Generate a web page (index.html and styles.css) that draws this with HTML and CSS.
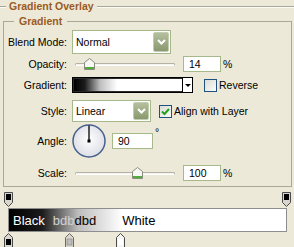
FILE: index.html
```html
<!DOCTYPE html>
<html>
  <head>
    <title>Gradient Overlay</title>
    <meta name="viewport" content="width=device-width, initial-scale=1.0" />
    <link rel="stylesheet" href="styles.css">
  </head>
  <body>
    <div class="panel">
      <div class="heading">
        <span class="rule rule-short"></span>
        <span class="heading-text">Gradient Overlay</span>
        <span class="rule"></span>
      </div>

      <fieldset class="group">
        <legend class="group-title">Gradient</legend>

        <div class="row row-blend">
          <span class="label">Blend Mode:</span>
          <div class="select select-blend">
            <span class="select-value">Normal</span>
            <span class="drop-btn">
              <svg width="9" height="6" viewBox="0 0 9 6"><path d="M1 1l3.5 3.5L8 1" stroke="#fff" stroke-width="2" fill="none"/></svg>
            </span>
          </div>
        </div>

        <div class="row row-opacity">
          <span class="label">Opacity:</span>
          <div class="slider">
            <span class="track"></span>
            <svg class="thumb" style="left: 14%" width="11" height="12" viewBox="0 0 11 12">
              <path d="M0.5 4.5L5.5 0.5L10.5 4.5V11.5H0.5Z" fill="#f7f7f3" stroke="#8c8b80"/>
              <rect x="1" y="9" width="9" height="2" fill="#4fae3a"/>
            </svg>
          </div>
          <span class="field">14</span>
          <span class="unit">%</span>
        </div>

        <div class="row row-gradient">
          <span class="label">Gradient:</span>
          <div class="grad-pick">
            <span class="grad-swatch"></span>
            <span class="grad-arrow"><span class="tri"></span></span>
          </div>
          <span class="check check-reverse"></span>
          <span class="check-label">Reverse</span>
        </div>

        <div class="row row-style">
          <span class="label">Style:</span>
          <div class="select select-style">
            <span class="select-value">Linear</span>
            <span class="drop-btn">
              <svg width="9" height="6" viewBox="0 0 9 6"><path d="M1 1l3.5 3.5L8 1" stroke="#fff" stroke-width="2" fill="none"/></svg>
            </span>
          </div>
          <span class="check check-align">
            <svg width="11" height="11" viewBox="0 0 11 11"><path d="M2 5.5l2.5 2.5 4.5-5" stroke="#21a121" stroke-width="2" fill="none"/></svg>
          </span>
          <span class="check-label">Align with Layer</span>
        </div>

        <div class="row row-angle">
          <span class="label">Angle:</span>
          <svg class="dial" width="34" height="34" viewBox="0 0 34 34">
            <defs>
              <radialGradient id="dialfill" cx="50%" cy="45%" r="55%">
                <stop offset="0%" stop-color="#ffffff"/>
                <stop offset="100%" stop-color="#dcdee6"/>
              </radialGradient>
            </defs>
            <circle cx="17" cy="17" r="16" fill="url(#dialfill)" stroke="#47608f" stroke-width="1.5"/>
            <line x1="17" y1="1.5" x2="17" y2="17" stroke="#000" stroke-width="1.3"/>
            <rect x="15.5" y="15.5" width="3" height="3" fill="#000"/>
          </svg>
          <span class="field field-angle">90</span>
          <span class="unit unit-deg">°</span>
        </div>

        <div class="row row-scale">
          <span class="label">Scale:</span>
          <div class="slider">
            <span class="track"></span>
            <svg class="thumb" style="left: 62%" width="11" height="12" viewBox="0 0 11 12">
              <path d="M0.5 4.5L5.5 0.5L10.5 4.5V11.5H0.5Z" fill="#f7f7f3" stroke="#8c8b80"/>
              <rect x="1" y="9" width="9" height="2" fill="#4fae3a"/>
            </svg>
          </div>
          <span class="field">100</span>
          <span class="unit">%</span>
        </div>
      </fieldset>

      <div class="editor">
        <div class="stops">
          <svg class="stop" style="left: 0%" width="9" height="15" viewBox="0 0 9 15">
            <path d="M0.5 0.5H8.5V10.5L4.5 14.5L0.5 10.5Z" fill="#d8d6cc" stroke="#4a4a4a"/>
            <rect x="2" y="2" width="5" height="6" fill="#000"/>
          </svg>
          <svg class="stop" style="left: 99.5%" width="9" height="15" viewBox="0 0 9 15">
            <path d="M0.5 0.5H8.5V10.5L4.5 14.5L0.5 10.5Z" fill="#d8d6cc" stroke="#4a4a4a"/>
            <rect x="2" y="2" width="5" height="6" fill="#000"/>
          </svg>
        </div>
        <div class="bar">
          <span class="bar-black">Black</span>
          <span class="bar-mid"><span class="light">bdb</span>dbd</span>
          <span class="bar-white">White</span>
        </div>
        <div class="stops stops-bottom">
          <svg class="stop" style="left: 0%" width="9" height="15" viewBox="0 0 9 15">
            <path d="M4.5 0.5L8.5 4.5V14.5H0.5V4.5Z" fill="#d8d6cc" stroke="#4a4a4a"/>
            <rect x="2" y="6" width="5" height="6" fill="#000"/>
          </svg>
          <svg class="stop" style="left: 22%" width="9" height="15" viewBox="0 0 9 15">
            <path d="M4.5 0.5L8.5 4.5V14.5H0.5V4.5Z" fill="#d8d6cc" stroke="#6a6a6a"/>
            <rect x="2" y="6" width="5" height="6" fill="#bdbdbd" stroke="#777" stroke-width="0.5"/>
          </svg>
          <svg class="stop" style="left: 40%" width="9" height="15" viewBox="0 0 9 15">
            <path d="M4.5 0.5L8.5 4.5V14.5H0.5V4.5Z" fill="#f4f4f0" stroke="#4a4a4a"/>
            <rect x="2" y="6" width="5" height="6" fill="#fff"/>
          </svg>
        </div>
      </div>
    </div>
  </body>
</html>
```

FILE: styles.css
```css
body {
  margin: 0;
  background: #ece9d8;
  color: #000;
  font-family: "Liberation Sans", Arial, sans-serif;
  font-size: 10.5px;
}
.panel {
  width: 294px;
  height: 247px;
  overflow: hidden;
}
.heading {
  display: flex;
  align-items: center;
  height: 13px;
}
.rule {
  flex: 1;
  height: 0;
  border-top: 1px solid #a9a797;
  border-bottom: 1px solid #fbfaf5;
}
.rule-short {
  flex: 0 0 6px;
}
.heading-text,
.group-title {
  color: #9b5a1d;
  font-weight: bold;
  line-height: 13px;
}
.heading-text {
  padding: 0 3px;
}

/* group box */
.group {
  margin: 2px 2px 0 3px;
  padding: 2px 0 5px;
  border: 1px solid #aca899;
  min-width: 0;
}
.group-title {
  margin-left: 10px;
  padding: 0 5px;
}
.row {
  display: flex;
  align-items: center;
}
.row-blend {
  height: 24px;
}
.row-opacity {
  height: 16px;
  margin-top: 2px;
}
.row-gradient {
  height: 16px;
  margin-top: 5px;
}
.row-style {
  height: 22px;
  margin-top: 7px;
}
.row-angle {
  height: 34px;
  margin-top: 2px;
}
.row-scale {
  height: 16px;
  margin-top: 7px;
}
.label {
  flex: none;
  width: 63px;
  margin-right: 5px;
  text-align: right;
}

/* dropdowns */
.select {
  display: flex;
  box-sizing: border-box;
  padding: 1px;
  border: 1px solid #a5b98b;
  background: #fff;
}
.select-blend {
  width: 99px;
  height: 24px;
}
.select-style {
  width: 79px;
  height: 22px;
}
.select-value {
  flex: 1;
  display: flex;
  align-items: center;
  padding-left: 2px;
}
.drop-btn {
  display: flex;
  align-items: center;
  justify-content: center;
  width: 16px;
  box-sizing: border-box;
  border: 1px solid #c3ccb2;
  border-radius: 2px;
  background: linear-gradient(#b3c09c, #8a986f);
}

/* sliders */
.slider {
  position: relative;
  display: flex;
  align-items: center;
  width: 100px;
  height: 12px;
  margin-left: 3px;
}
.track {
  flex: 1;
  height: 1px;
  border: 1px solid #b4b2a6;
  border-bottom-color: #fff;
  border-radius: 2px;
  background: #f4f3ee;
}
.thumb {
  position: absolute;
  top: 0;
  margin-left: -5.5px;
}

/* number fields */
.field {
  display: flex;
  align-items: center;
  width: 38px;
  height: 16px;
  box-sizing: border-box;
  margin-left: 8px;
  padding-left: 5px;
  border: 1px solid #a5b98b;
  background: #fff;
}
.field-angle {
  width: 41px;
  margin-left: 6px;
}
.unit {
  margin-left: 2px;
}
.unit-deg {
  align-self: flex-start;
  margin-top: 2px;
}

/* gradient picker */
.grad-pick {
  display: flex;
  width: 121px;
  height: 16px;
  box-sizing: border-box;
  border: 1px solid #000;
  box-shadow: inset 0 0 0 1px #2a2a2a;
}
.grad-swatch {
  flex: 1;
  margin: 1px 0 1px 1px;
  background: linear-gradient(to right, #000 0%, #1c1c1c 10%, #bdbdbd 24%, #fff 40%, #fff 100%);
}
.grad-arrow {
  display: flex;
  align-items: center;
  justify-content: center;
  width: 9px;
  border-left: 1px solid #000;
  background: #fff;
}
.tri {
  width: 0;
  height: 0;
  border-left: 3px solid transparent;
  border-right: 3px solid transparent;
  border-top: 3px solid #000;
}

/* checkboxes */
.check {
  display: flex;
  align-items: center;
  justify-content: center;
  width: 13px;
  height: 13px;
  box-sizing: border-box;
  border: 1px solid #1c5180;
  background: linear-gradient(135deg, #dcdcd5, #fbfbf9);
}
.check-reverse {
  margin-left: 11px;
}
.check-align {
  margin-left: 8px;
}
.check-label {
  margin-left: 2px;
}

/* gradient editor */
.editor {
  margin: 5px 7px 0 8px;
}
.stops {
  position: relative;
  height: 15px;
}
.stops-bottom {
  margin-top: 1px;
}
.stop {
  position: absolute;
  top: 0;
  margin-left: -4px;
}
.bar {
  display: flex;
  align-items: center;
  height: 24px;
  box-sizing: border-box;
  margin-top: 1px;
  padding-left: 4px;
  border: 1px solid #8e8e8e;
  background: linear-gradient(to right, #000 0%, #1c1c1c 12%, #bdbdbd 25%, #fff 41%, #fff 100%);
  font-size: 13px;
}
.bar-black {
  color: #fff;
}
.bar-mid {
  margin-left: 8px;
}
.light {
  color: #d2d2d2;
}
.bar-white {
  margin-left: 26px;
}
```
